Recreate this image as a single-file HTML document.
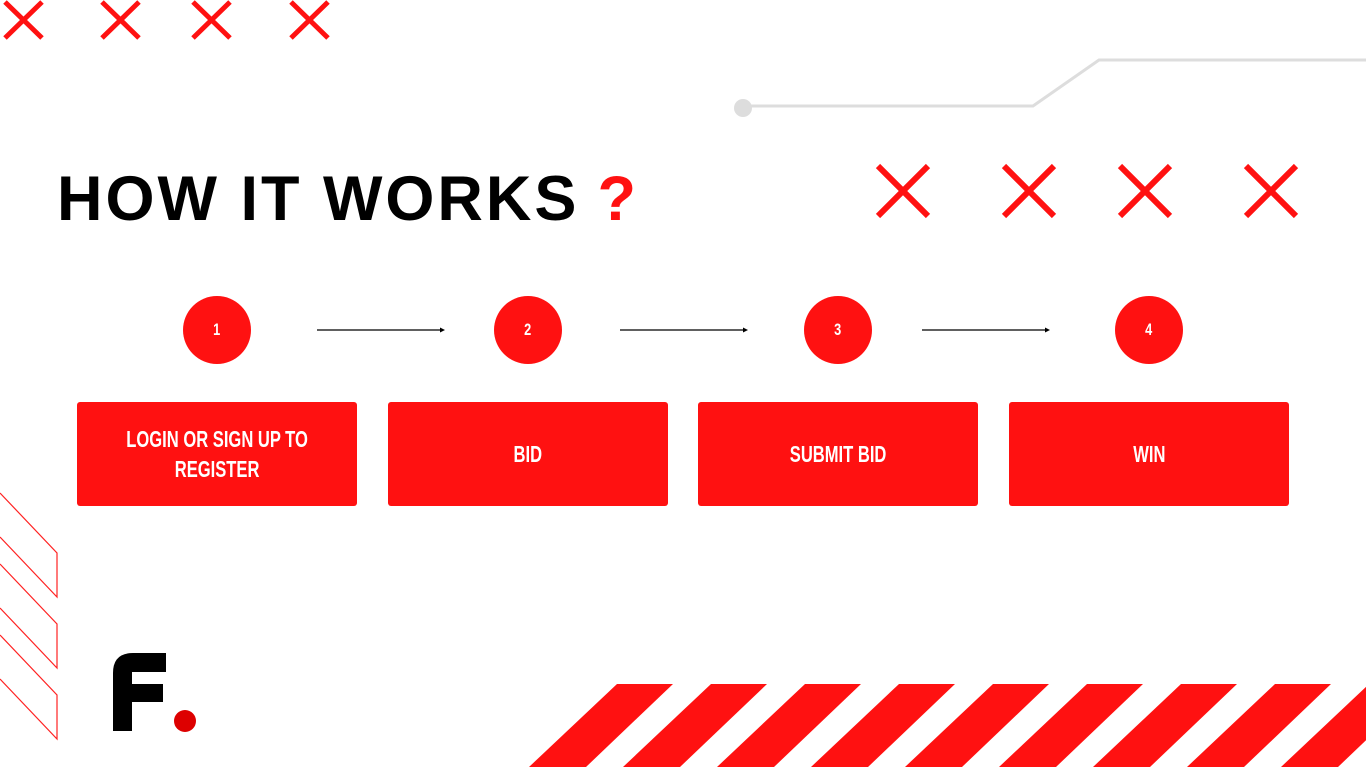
<!DOCTYPE html>
<html><head><style>
body{margin:0;width:1366px;height:768px;overflow:hidden;background:#fff;position:relative;font-family:"Liberation Sans",sans-serif}
.t{position:absolute;left:57px;top:163px;font-weight:bold;font-size:63px;color:#000;white-space:nowrap;letter-spacing:3px}
.c{position:absolute;width:68px;height:68px;border-radius:50%;background:#ff1111;color:#fff;top:296px;text-align:center;line-height:68px;font-weight:bold;font-size:17px}
.c span{display:inline-block;transform:scaleX(0.75)}
.b{position:absolute;top:402px;width:280px;height:104px;background:#ff1111;border-radius:3px;color:#fff;display:flex;align-items:center;justify-content:center;text-align:center}
.b span{display:inline-block;font-weight:bold;font-size:23px;line-height:30px;transform:scaleX(0.72);white-space:nowrap}
</style></head><body>
<svg width="1366" height="768" style="position:absolute;left:0;top:0">
<g stroke="#ff1111" stroke-width="5">
<path d="M5 2L42 38M42 2L5 38M102 2L139 38M139 2L102 38M193 2L230 38M230 2L193 38M291 2L328 38M328 2L291 38"/>
<path d="M878 166L928 216M928 166L878 216M1004 166L1054 216M1054 166L1004 216M1120 166L1170 216M1170 166L1120 216M1246 166L1296 216M1296 166L1246 216" stroke-width="6"/>
</g>
<g stroke="#ddd" stroke-width="3" fill="none"><path d="M743 106H1033L1099 60H1366"/></g>
<circle cx="743" cy="108" r="9" fill="#ddd"/>
<g stroke="#000" stroke-width="1.3"><path d="M317 330H441M620 330H744M922 330H1046"/></g>
<g fill="#000"><path d="M445 330l-5-2.5v5zM748 330l-5-2.5v5zM1050 330l-5-2.5v5z"/></g>
<g stroke="#ff2222" stroke-width="1.2" fill="none">
<path d="M0 493L57 553V597L0 537"/><path d="M0 564L57 624V668L0 608"/><path d="M0 635L57 695V739L0 679"/>
</g>
<g fill="#ff1111">
<path d="M617 684h56l-87 83h-57z"/><path d="M711 684h56l-87 83h-57z"/><path d="M805 684h56l-87 83h-57z"/><path d="M899 684h56l-87 83h-57z"/><path d="M993 684h56l-87 83h-57z"/><path d="M1087 684h56l-87 83h-57z"/><path d="M1181 684h56l-87 83h-57z"/><path d="M1275 684h56l-87 83h-57z"/><path d="M1369 684h56l-87 83h-57z"/>
</g>
<path d="M113 731V673Q113 653 133 653H166V672H132V684H163V702H132V731Z" fill="#000"/>
<circle cx="185" cy="721" r="11" fill="#dd0000"/>
</svg>
<div class="t">HOW IT WORKS<span style="color:#ff1111;margin-left:18px">?</span></div>
<div class="c" style="left:183px"><span>1</span></div><div class="c" style="left:494px"><span>2</span></div><div class="c" style="left:804px"><span>3</span></div><div class="c" style="left:1115px"><span>4</span></div>
<div class="b" style="left:77px"><span>LOGIN OR SIGN UP TO<br>REGISTER</span></div>
<div class="b" style="left:388px"><span>BID</span></div>
<div class="b" style="left:698px"><span>SUBMIT BID</span></div>
<div class="b" style="left:1009px"><span>WIN</span></div>
</body></html>
